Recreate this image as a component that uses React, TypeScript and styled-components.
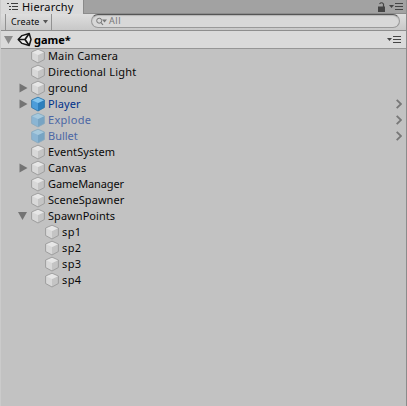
import React from 'react';
import styled, { createGlobalStyle } from 'styled-components';

const Global = createGlobalStyle`
  * { box-sizing: border-box; }
  body { margin: 0; background: #c2c2c2; }
`;
const Panel = styled.div`
  width: 407px; height: 406px; overflow: hidden;
  display: flex; flex-direction: column;
  background: #c2c2c2;
  border-left: 1px solid #cbcbcb;
  border-right: 1px solid #8b8b8b;
  font: 11px/16px "Noto Sans", "Open Sans", sans-serif;
  color: #090909;
`;
const TabBar = styled.div`
  height: 14px; flex: none; display: flex; align-items: center;
  background: #a2a2a2; border-bottom: 1px solid #8c8c8c;
`;
const Tab = styled.div`
  width: 83px; height: 14px; padding-left: 6px; align-self: flex-start;
  display: flex; align-items: center; gap: 3px;
  background: #dadada; border-right: 1px solid #8a8a8a;
`;
const TabIcons = styled.div`
  margin-left: auto; padding-right: 3px;
  display: flex; align-items: center; gap: 3px;
`;
const Toolbar = styled.div`
  height: 17px; flex: none; display: flex; align-items: center;
  padding: 0 5px 0 4px;
  background: linear-gradient(#dedede, #c8c8c8);
  border-bottom: 1px solid #8e8e8e;
`;
const CreateButton = styled.button`
  width: 47px; height: 16px; padding: 0 3px 0 5px; border: solid #929292; border-width: 0 1px;
  display: flex; align-items: center; justify-content: space-between;
  background: transparent; font: inherit; color: inherit;
`;
const Search = styled.div`
  width: 309px; height: 14px; margin: 0 1px 0 auto; padding-left: 4px;
  align-self: flex-start;
  display: flex; align-items: center; gap: 2px;
  border: 1px solid #999; border-top-color: #555; border-radius: 7px;
  background: #d8d8d8; box-shadow: inset 0 1px 1px #b5b5b5;
  color: #777;
`;
const SceneRow = styled.div`
  height: 18px; flex: none; display: flex; align-items: center;
  padding: 0 5px 0 2px;
  background: #dadada; border-bottom: 1px solid #969696;
  font-weight: 700; color: #000;
`;
const SceneIcon = styled.svg`margin: 0 2px 0 3px;`;
const SceneMenu = styled.div`margin-left: auto; display: flex;`;
const Tree = styled.div`display: flex; flex-direction: column; margin-top: -1px;`;
const Row = styled.div<{ $depth: number; $tone: string }>`
  height: 16px; display: flex; align-items: center;
  padding: 0 4px 0 ${p => 16 + p.$depth * 14}px;
  color: ${p => p.$tone};
`;
const Fold = styled.div`width: 14px; height: 16px; display: flex; align-items: center; flex: none;`;
const Cube = styled.svg`width: 14px; height: 16px; flex: none;`;
const Label = styled.span<{ $track?: number; $size?: number; $left?: number }>`
  white-space: pre; line-height: 16px;
  margin-left: ${p => p.$left ?? 0}px;
  font-size: ${p => p.$size ?? 11}px;
  letter-spacing: ${p => p.$track ?? 0}px;
`;
const Chevron = styled.svg`margin-left: auto;`;

const Arrow = ({ open, color = '#747474' }: { open?: boolean; color?: string }) => (
  <svg width="11" height="12" viewBox="0 0 11 12">
    <path d={open ? 'M1 2h9L5.5 10z' : 'M2.5 1.5v9L10.5 6z'} fill={color} />
  </svg>
);

const Menu = () => (
  <svg width="14" height="9" viewBox="0 0 14 9">
    <path d="M0 3h5L2.5 6z" fill="#444" />
    <path d="M6 1.5h8M6 4.5h8M6 7.5h8" stroke="#444" strokeWidth="1.2" />
  </svg>
);

type Kind = 'plain' | 'prefab' | 'faded';
const cubes = {
  plain: ['#e6e6e6', '#d8d8d8', '#c4c4c4', '#999999'],
  prefab: ['#83c5ee', '#4c9dda', '#2d7fbd', '#3679aa'],
  faded: ['#a6c9dd', '#8bb5d3', '#78a4c3', '#8caabd'],
};
const tones = { plain: '#090909', prefab: '#00318a', faded: '#4c67a5' };

const CubeIcon = ({ kind }: { kind: Kind }) => {
  const [top, left, right, edge] = cubes[kind];
  return (
    <Cube viewBox="0 0 14 16">
      <path d="M7 1.2L13.4 4v7.5L7 15 .6 11.5V4z" fill={left} />
      <path d="M7 7v8l6.4-3.5V4z" fill={right} />
      <path d="M7 1.2L13.4 4 7 7 .6 4z" fill={top} />
      <path d="M7 1.2L13.4 4v7.5L7 15 .6 11.5V4z" fill="none" stroke={edge} strokeWidth=".9" />
    </Cube>
  );
};

interface Item { name: string; kind?: Kind; depth?: number; fold?: 'open' | 'closed'; track: number }
const items: Item[] = [
  { name: 'Main Camera', track: 0.12 },
  { name: 'Directional Light', track: 0.2 },
  { name: 'ground', fold: 'closed', track: 0.3 },
  { name: 'Player', kind: 'prefab', fold: 'closed', track: 0.1 },
  { name: 'Explode', kind: 'faded', track: 0.3 },
  { name: 'Bullet', kind: 'faded', track: 0 },
  { name: 'EventSystem', track: 0.1 },
  { name: 'Canvas', fold: 'closed', track: 0.25 },
  { name: 'GameManager', track: -0.12 },
  { name: 'SceneSpawner', track: 0.05 },
  { name: 'SpawnPoints', fold: 'open', track: 0.05 },
  { name: 'sp1', depth: 1, track: 0.4 },
  { name: 'sp2', depth: 1, track: 0.4 },
  { name: 'sp3', depth: 1, track: 0.4 },
  { name: 'sp4', depth: 1, track: 0.4 },
];

export default function App() {
  return (
    <>
      <Global />
      <Panel>
        <TabBar>
          <Tab>
            <svg width="12" height="10" viewBox="0 0 12 10">
              <path d="M0 1.5h2M4 1.5h7M2 4.5h2M5 4.5h6M2 7.5h2M5 7.5h6" stroke="#3d3d3d" strokeWidth="1.2" />
            </svg>
            <Label $track={0.2}>Hierarchy</Label>
          </Tab>
          <TabIcons>
            <svg width="9" height="10" viewBox="0 0 9 10">
              <path d="M1 4.5h7V10H1z" fill="#444" />
              <path d="M2.5 2Q4.5-.5 6.5 2v3" fill="none" stroke="#444" strokeWidth="1.2" />
            </svg>
            <Menu />
          </TabIcons>
        </TabBar>
        <Toolbar>
          <CreateButton>
            <Label $size={9} $track={0.15}>Create</Label>
            <svg width="5" height="5" viewBox="0 0 5 5"><path d="M0 0h5L2.5 3.5z" fill="#555" /></svg>
          </CreateButton>
          <Search>
            <svg width="11" height="9" viewBox="0 0 11 9">
              <circle cx="3.2" cy="3.7" r="2.5" fill="none" stroke="#777" />
              <path d="M5 5.5l2 2.5" stroke="#777" strokeWidth="1.2" />
              <path d="M6 2.5h5L8.5 5.5z" fill="#777" />
            </svg>
            <Label $size={9} $track={0.6}>All</Label>
          </Search>
        </Toolbar>
        <SceneRow>
          <Arrow open color="#8b8b8b" />
          <SceneIcon width="15" height="15" viewBox="0 0 15 15">
            <path d="M1.2 7.5L5 3.6 12.2 1.5 14 7.5l-1.8 6L5 11.4z" fill="#efefef" stroke="#161616" strokeWidth="1.5" strokeLinejoin="round" />
            <path d="M1.5 7.5h6.5M8 7.5l3.8-5.5M8 7.5l3.8 5.5" fill="none" stroke="#161616" strokeWidth="1.7" />
          </SceneIcon>
          <Label>game*</Label>
          <SceneMenu><Menu /></SceneMenu>
        </SceneRow>
        <Tree>
          {items.map(({ name, kind = 'plain', depth = 0, fold, track }) => (
            <Row key={name} $depth={depth} $tone={tones[kind]}>
              <Fold>{fold && <Arrow open={fold === 'open'} />}</Fold>
              <CubeIcon kind={kind} />
              <Label $track={track} $left={3}>{name}</Label>
              {kind !== 'plain' && (
                <Chevron width="6" height="10" viewBox="0 0 6 10">
                  <path d="M.7 .8L5 5 .7 9.2" fill="none" stroke="#777" strokeWidth="1.8" />
                </Chevron>
              )}
            </Row>
          ))}
        </Tree>
      </Panel>
    </>
  );
}
